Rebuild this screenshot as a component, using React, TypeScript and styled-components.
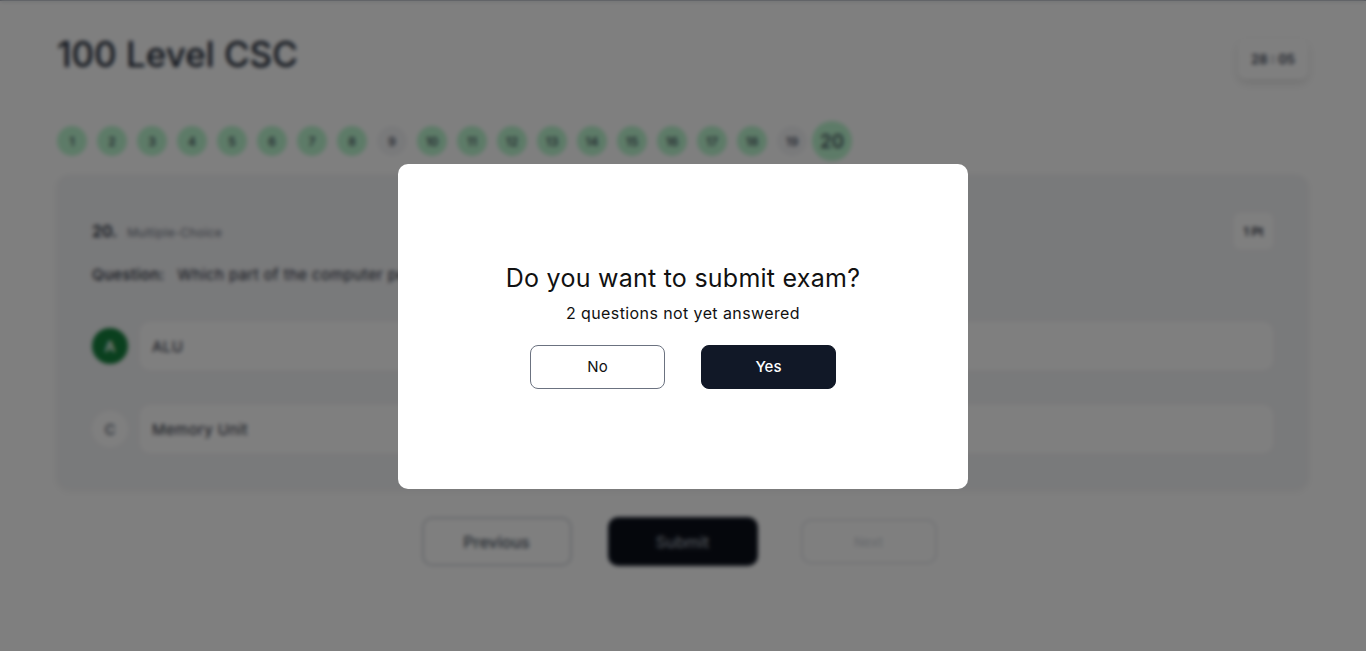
import React from 'react';
import styled, { createGlobalStyle } from 'styled-components';

const GlobalStyle = createGlobalStyle`
  html, body {
    margin: 0;
    padding: 0;
    background: #ffffff;
  }
  body {
    font-family: Inter, "Open Sans", sans-serif;
    color: #111827;
    border-top: 1px solid #9ca3af;
  }
  * {
    box-sizing: border-box;
  }
`;

const Page = styled.main`
  display: flex;
  flex-direction: column;
  min-height: 650px;
  padding: 30px 58px 0 57px;
`;

const Header = styled.header`
  display: flex;
  justify-content: space-between;
  align-items: flex-start;
`;

const CourseTitle = styled.h1`
  margin: 0;
  font-size: 35px;
  font-weight: 500;
  line-height: 46px;
  color: #1f2937;
`;

const Timer = styled.div`
  margin-top: 8px;
  width: 70px;
  height: 40px;
  display: flex;
  align-items: center;
  justify-content: center;
  border-radius: 8px;
  background: #ffffff;
  box-shadow: 0 4px 10px rgba(0, 0, 0, 0.12);
  font-size: 13px;
  font-weight: 600;
  color: #374151;
`;

const NumberStrip = styled.nav`
  display: flex;
  align-items: center;
  gap: 10px;
  margin-top: 42px;
`;

const NumberDot = styled.span<{ answered: boolean; current?: boolean }>`
  width: ${(p) => (p.current ? '40px' : '30px')};
  height: ${(p) => (p.current ? '40px' : '30px')};
  margin: ${(p) => (p.current ? '0 -5px' : '0')};
  border-radius: 50%;
  display: flex;
  align-items: center;
  justify-content: center;
  font-size: ${(p) => (p.current ? '19px' : '12px')};
  font-weight: 500;
  color: #374151;
  background: ${(p) => (p.answered ? '#bbf7d0' : '#f3f4f6')};
`;

const QuestionCard = styled.section`
  margin-top: 14px;
  background: #f3f4f6;
  border-radius: 12px;
  padding: 38px 35px 36px 35px;
  box-shadow: 0 2px 8px rgba(0, 0, 0, 0.06);
  height: 314px;
`;

const CardHead = styled.div`
  display: flex;
  justify-content: space-between;
  align-items: center;
`;

const QuestionMeta = styled.div`
  display: flex;
  align-items: baseline;
  gap: 10px;
`;

const QNumber = styled.span`
  font-size: 16px;
  font-weight: 600;
  color: #1f2937;
`;

const QType = styled.span`
  font-size: 12px;
  letter-spacing: 0.3px;
  color: #6b7280;
`;

const PointBadge = styled.span`
  width: 39px;
  height: 36px;
  display: flex;
  align-items: center;
  justify-content: center;
  background: #ffffff;
  border-radius: 6px;
  font-size: 12px;
  font-weight: 600;
  color: #1f2937;
`;

const QuestionText = styled.p`
  margin: 16px 0 0;
  font-size: 15px;
  letter-spacing: 0.4px;
  color: #1f2937;
  display: flex;
  gap: 13px;
`;

const QLabel = styled.span`
  font-weight: 500;
`;

const Options = styled.div`
  display: grid;
  grid-template-columns: 1fr 1fr;
  column-gap: 30px;
  row-gap: 35px;
  margin-top: 38px;
`;

const OptionRow = styled.div`
  display: flex;
  align-items: center;
  gap: 12px;
`;

const OptionLetter = styled.span<{ selected: boolean }>`
  width: 36px;
  height: 36px;
  flex: none;
  border-radius: 50%;
  display: flex;
  align-items: center;
  justify-content: center;
  font-size: 15px;
  font-weight: 600;
  color: ${(p) => (p.selected ? '#ffffff' : '#6b7280')};
  background: ${(p) => (p.selected ? '#15803d' : '#ffffff')};
`;

const OptionBox = styled.div`
  flex: 1;
  height: 48px;
  display: flex;
  align-items: center;
  padding: 0 12px;
  border-radius: 10px;
  background: #ffffff;
  font-size: 15px;
  letter-spacing: 0.4px;
  color: #1f2937;
`;

const Footer = styled.div`
  display: flex;
  justify-content: center;
  gap: 36px;
  margin-top: 28px;
  padding-right: 7px;
`;

const NavButton = styled.button<{ variant: 'outline' | 'solid' | 'disabled' }>`
  width: ${(p) => (p.variant === 'disabled' ? '136px' : '150px')};
  height: ${(p) => (p.variant === 'disabled' ? '45px' : '49px')};
  margin-top: ${(p) => (p.variant === 'disabled' ? '2px' : '0')};
  margin-left: ${(p) => (p.variant === 'disabled' ? '7px' : '0')};
  border-radius: 10px;
  font-family: inherit;
  font-size: ${(p) => (p.variant === 'disabled' ? '13px' : '16px')};
  font-weight: 500;
  border: 2px solid ${(p) => (p.variant === 'solid' ? '#111827' : p.variant === 'disabled' ? '#e5e7eb' : '#d1d5db')};
  background: ${(p) => (p.variant === 'solid' ? '#0b0f19' : '#ffffff')};
  color: ${(p) => (p.variant === 'solid' ? '#9ca3af' : p.variant === 'disabled' ? '#d1d5db' : '#4b5563')};
`;

const Overlay = styled.div`
  position: fixed;
  inset: 0;
  display: flex;
  align-items: center;
  justify-content: center;
  background: rgba(0, 0, 0, 0.5);
  backdrop-filter: blur(2px);
`;

const Modal = styled.div`
  width: 570px;
  height: 325px;
  margin-top: 1px;
  background: #ffffff;
  border-radius: 10px;
  display: flex;
  flex-direction: column;
  align-items: center;
  justify-content: center;
  padding-bottom: 2px;
`;

const ModalTitle = styled.h2`
  margin: 0;
  font-size: 25px;
  font-weight: 400;
  line-height: 32px;
  letter-spacing: 0.25px;
  color: #111111;
`;

const ModalText = styled.p`
  margin: 7px 0 0;
  font-size: 16px;
  line-height: 24px;
  letter-spacing: 0.4px;
  color: #111111;
`;

const ModalActions = styled.div`
  display: flex;
  gap: 36px;
  margin-top: 20px;
`;

const ModalButton = styled.button<{ primary?: boolean }>`
  width: 135px;
  height: 44px;
  border-radius: 8px;
  font-family: inherit;
  font-size: 15px;
  font-weight: ${(p) => (p.primary ? 500 : 400)};
  border: 1px solid ${(p) => (p.primary ? '#111827' : '#6b7280')};
  background: ${(p) => (p.primary ? '#111827' : '#ffffff')};
  color: ${(p) => (p.primary ? '#ffffff' : '#111111')};
`;

const unanswered = [9, 19];
const current = 20;

export default function App() {
  return (
    <>
      <GlobalStyle />
      <Page aria-hidden>
        <Header>
          <CourseTitle>100 Level CSC</CourseTitle>
          <Timer>28 : 05</Timer>
        </Header>
        <NumberStrip>
          {Array.from({ length: 20 }, (_, i) => i + 1).map((n) => (
            <NumberDot key={n} answered={!unanswered.includes(n)} current={n === current}>
              {n}
            </NumberDot>
          ))}
        </NumberStrip>
        <QuestionCard>
          <CardHead>
            <QuestionMeta>
              <QNumber>20.</QNumber>
              <QType>Multiple-Choice</QType>
            </QuestionMeta>
            <PointBadge>1 Pt</PointBadge>
          </CardHead>
          <QuestionText>
            <QLabel>Question:</QLabel>
            <span>Which part of the computer performs arithmetic and logical operations?</span>
          </QuestionText>
          <Options>
            <OptionRow>
              <OptionLetter selected>A</OptionLetter>
              <OptionBox>ALU</OptionBox>
            </OptionRow>
            <OptionRow>
              <OptionLetter selected={false}>B</OptionLetter>
              <OptionBox>Control Unit</OptionBox>
            </OptionRow>
            <OptionRow>
              <OptionLetter selected={false}>C</OptionLetter>
              <OptionBox>Memory Unit</OptionBox>
            </OptionRow>
            <OptionRow>
              <OptionLetter selected={false}>D</OptionLetter>
              <OptionBox>Input Unit</OptionBox>
            </OptionRow>
          </Options>
        </QuestionCard>
        <Footer>
          <NavButton variant="outline">Previous</NavButton>
          <NavButton variant="solid">Submit</NavButton>
          <NavButton variant="disabled">Next</NavButton>
        </Footer>
      </Page>
      <Overlay>
        <Modal role="dialog">
          <ModalTitle>Do you want to submit exam?</ModalTitle>
          <ModalText>2 questions not yet answered</ModalText>
          <ModalActions>
            <ModalButton>No</ModalButton>
            <ModalButton primary>Yes</ModalButton>
          </ModalActions>
        </Modal>
      </Overlay>
    </>
  );
}
